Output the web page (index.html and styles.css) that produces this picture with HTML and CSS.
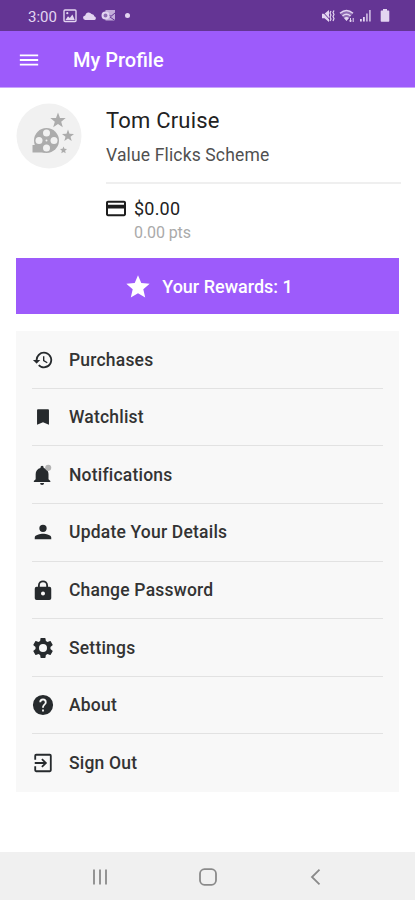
FILE: index.html
```html
<!DOCTYPE html>
<html lang="en">
<head>
<meta charset="utf-8">
<title>My Profile</title>
<link rel="stylesheet" href="styles.css">
</head>
<body>
<div class="screen">
  <div class="status">
    <span class="time">3:00</span>
    <svg class="s-image" width="14" height="14" viewBox="0 0 14 14"><rect x="1" y="1" width="12" height="11.5" rx="1" fill="none" stroke="currentColor" stroke-width="1.4"/><path d="M2.5 11 5 7.2l1.800 1.700L9.400 5.600l2.400 5.400z" fill="currentColor"/><circle cx="4.300" cy="4.200" r="1.100" fill="currentColor"/></svg>
    <svg class="s-cloud" width="15" height="10" viewBox="0 0 14 10"><path d="M3 9a2.300 2.300 0 0 1-.3-4.600A3.500 3.500 0 0 1 9 3a3 3 0 0 1 3 2.500A1.800 1.800 0 0 1 12 9z" fill="currentColor"/></svg>
    <svg class="s-mail" width="15" height="13" viewBox="0 0 15 13"><path d="M4.500 1h9.500v10.500H4.500z" fill="currentColor" opacity=".75"/><path d="m5 4 5 3.300L14 4M9 8l5 3.500" fill="none" stroke="#643594"/><circle cx="4.500" cy="6.500" r="3" fill="#8f6cb3" stroke="currentColor" stroke-width="2"/></svg>
    <span class="dot"></span>
    <span class="grow"></span>
    <svg class="s-mute" width="14" height="14" viewBox="0 0 14 14"><path d="M1 4.700h2.500L8 1v12L3.500 9.300H1z" fill="currentColor"/><path d="m.5 1.500 10 11" stroke="#643594"/><path d="m10 2-1 2 1 2-1 2 1 2-1 2M13 1.500l-1 2 1 2-1 2 1 2-1 2.500" fill="none" stroke="currentColor" stroke-width="1.200"/></svg>
    <svg class="s-wifi" width="16" height="14" viewBox="0 0 16 14"><path d="M1 4.200q6.500-5.500 13 0L7.500 12z" fill="currentColor" opacity=".35"/><path d="M1 4.200q6.500-5.500 13 0M3.500 7q4-3.400 8 0" fill="none" stroke="currentColor" stroke-width="1.500"/><path d="m5 9 2.500 3L10 9q-2.500-2-5 0z" fill="currentColor"/><path d="M11.500 9v4M10.500 11.500l1 1.500 1-1.500M14.200 13V9" fill="none" stroke="currentColor"/></svg>
    <svg class="s-signal" width="13" height="13" viewBox="0 0 13 13"><path d="M1 10h1.800v2.500H1zM4 8h1.800v4.500H4z" fill="currentColor"/><path d="M7 4.500h1.800v8H7zM10 1h1.800v11.500H10z" fill="currentColor" opacity=".75"/></svg>
    <svg class="s-battery" width="10" height="13" viewBox="0 0 10 13"><path d="M3 0h4v1.500h1.500q.8 0 .8.800V12q0 .8-.8.800h-7q-.8 0-.8-.8V2.300q0-.8.800-.8H3z" fill="currentColor"/></svg>
  </div>
  <header class="bar">
    <svg class="burger" width="22" height="22" viewBox="0 0 24 24"><path d="M2 18h20v-2H2zm0-5h20v-2H2zm0-7v2h20V6z" fill="#fff"/></svg>
    <h1>My Profile</h1>
  </header>
  <main>
    <section class="profile">
      <svg class="avatar" width="66" height="66" viewBox="0 0 66 66">
        <circle cx="33" cy="33" r="32.500" fill="#f1f1f1"/>
        <circle cx="30.500" cy="37.500" r="12.500" fill="#acacac"/><path d="M16.500 42H29v7.500H16.500z" fill="#acacac"/>
        <g fill="#f1f1f1"><circle cx="30.500" cy="30" r="3.500"/><circle cx="30.500" cy="45" r="3.500"/><circle cx="23" cy="37.500" r="3.500"/><circle cx="38" cy="37.500" r="3.500"/><circle cx="30.500" cy="37.500" r="1"/></g>
        <g fill="#acacac"><path d="m42 9.500 2 5.400 5.700.2-4.500 3.600 1.600 5.500-4.800-3.200-4.800 3.200 1.600-5.500-4.500-3.600 5.700-.2z"/><path d="m52 26.500 1.500 4.200 4.500.2-3.500 2.800 1.200 4.300-3.700-2.500-3.700 2.500 1.200-4.300-3.500-2.800 4.500-.2z"/><path d="m47.500 43.500 1 2.300 2.500.2-1.900 1.700.6 2.500-2.200-1.300-2.200 1.300.6-2.500-1.900-1.700 2.500-.2z"/></g>
      </svg>
      <div class="info">
        <h2>Tom Cruise</h2>
        <p class="scheme">Value Flicks Scheme</p>
        <div class="balance">
          <svg width="24" height="23" viewBox="0 0 24 24" preserveAspectRatio="none"><path d="M20 4H4c-1.110 0-2 .89-2 2v12c0 1.110.89 2 2 2h16c1.110 0 2-.89 2-2V6c0-1.110-.89-2-2-2zm0 14H4v-6h16v6zm0-10H4V6h16v2z" fill="#1d1d1d"/></svg>
          <div><div class="money">$0.00</div><div class="pts">0.00 pts</div></div>
        </div>
      </div>
    </section>
    <div class="rewards">
      <svg width="28" height="28" viewBox="0 0 24 24"><path d="M12 17.270 18.180 21l-1.640-7.030L22 9.240l-7.190-.61L12 2 9.190 8.630 2 9.240l5.460 4.730L5.820 21z" fill="#fff"/></svg>
      <span>Your Rewards: 1</span>
    </div>
    <nav class="menu">
      <div class="item"><svg viewBox="0 0 24 24"><path d="M13 3a9 9 0 0 0-9 9H1l3.890 3.890.07.14L9 12H6a7 7 0 1 1 2.060 4.940l-1.420 1.420A9 9 0 1 0 13 3zm-1 5v5l4.280 2.540.72-1.210-3.500-2.080V8z"/></svg><span>Purchases</span></div>
      <div class="item"><svg viewBox="0 0 24 24"><path d="M17.500 3.500h-11Q5.500 3.500 5.500 4.500v16l6.500-2.800 6.500 2.800v-16q0-1-1-1z"/></svg><span>Watchlist</span></div>
      <div class="item"><svg viewBox="0 0 24 24"><path d="M11 23a2.200 2.200 0 0 0 2.200-2.200H8.800A2.200 2.200 0 0 0 11 23zM18 16.500V11c0-3.200-1.900-5.900-5.300-6.600V3.600a1.700 1.700 0 0 0-3.400 0v.8C5.900 5.100 4 7.800 4 11v5.500l-2 2v1.200h18v-1.200z"/><circle cx="17.700" cy="4.200" r="3.300" fill="#b4b4b4"/></svg><span>Notifications</span></div>
      <div class="item"><svg viewBox="0 0 24 24"><path d="M12 12a4 4 0 1 0 0-8 4 4 0 0 0 0 8zm0 2c-3 0-9 1.340-9 4v2h18v-2c0-2.660-6-4-9-4z"/></svg><span>Update Your Details</span></div>
      <div class="item"><svg viewBox="0 0 24 24"><path d="M19 8.500h-1.500V7a5.500 5.500 0 0 0-11 0v1.500H5a2 2 0 0 0-2 2V21a2 2 0 0 0 2 2h14a2 2 0 0 0 2-2V10.500a2 2 0 0 0-2-2zM12 18a2.200 2.200 0 1 1 0-4.400 2.200 2.200 0 0 1 0 4.400zm3.500-9.500h-7V7a3.500 3.500 0 0 1 7 0z"/></svg><span>Change Password</span></div>
      <div class="item"><svg class="gear" viewBox="0 0 24 24"><path fill-rule="evenodd" d="M19.430 12.980c.04-.32.070-.64.070-.98s-.03-.66-.07-.98l2.110-1.650c.19-.15.240-.42.120-.64l-2-3.460c-.12-.22-.39-.3-.61-.22l-2.490 1c-.52-.4-1.080-.73-1.690-.98l-.38-2.650A.49.49 0 0 0 14 2h-4c-.25 0-.46.180-.49.420l-.38 2.650c-.61.250-1.170.59-1.690.98l-2.490-1c-.23-.09-.49 0-.61.220l-2 3.460c-.13.220-.07.490.120.640l2.110 1.650c-.04.320-.07.650-.07.980s.03.660.07.980l-2.110 1.650c-.19.150-.24.420-.12.640l2 3.460c.12.220.39.300.61.220l2.490-1c.52.400 1.080.73 1.690.98l.38 2.650c.03.240.24.420.49.420h4c.25 0 .46-.18.490-.42l.38-2.650c.61-.25 1.170-.59 1.690-.98l2.490 1c.23.090.49 0 .61-.22l2-3.460c.12-.22.070-.49-.12-.64zM12 16a4 4 0 1 1 0-8 4 4 0 0 1 0 8z"/></svg><span>Settings</span></div>
      <div class="item"><svg viewBox="0 0 24 24"><path d="M12 1a11 11 0 1 0 0 22 11 11 0 0 0 0-22zm1 18h-2v-2h2zm2.070-7.750-.9.920C13.450 12.900 13 13.500 13 15h-2v-.5c0-1.100.45-2.100 1.170-2.830l1.240-1.260A2 2 0 1 0 10 9H8a4 4 0 1 1 8 0c0 .88-.36 1.680-.93 2.250z"/></svg><span>About</span></div>
      <div class="item"><svg viewBox="0 0 24 24"><path d="M10.090 15.590 11.500 17l5-5-5-5-1.410 1.410L12.670 11H3v2h9.670zM19.500 2h-15a2 2 0 0 0-2 2V8.500h2V4h15v16h-15v-4.500h-2V20a2 2 0 0 0 2 2h15a2 2 0 0 0 2-2V4a2 2 0 0 0-2-2z"/></svg><span>Sign Out</span></div>
    </nav>
  </main>
  <footer class="navbar">
    <svg width="18" height="18" viewBox="0 0 18 18"><path d="M3 1.500v15M9 1.500v15M15 1.500v15"/></svg>
    <svg width="18" height="18" viewBox="0 0 18 18"><rect x="1" y="1.200" width="16" height="15.600" rx="4.500"/></svg>
    <svg width="18" height="18" viewBox="0 0 18 18"><path d="M12.500 1.700 5 9l7.500 7.300"/></svg>
  </footer>
</div>
</body>
</html>
```
FILE: styles.css
```css
* { box-sizing: border-box; }
body, h1, h2, p { margin: 0; }
body { background: #fff; color: #222; font-family: Roboto, "Liberation Sans", sans-serif; }
svg { display: block; flex: none; }
.screen { width: 415px; height: 900px; display: flex; flex-direction: column; overflow: hidden; }

.status { height: 31px; flex: none; background: #643594; color: #e3d5f1; display: flex; align-items: center; padding: 0 25px 0 28px; }
.time { font-size: 15px; line-height: 18px; width: 35px; margin-top: 2px; }
.s-cloud { margin-left: 5px; }
.s-mail { margin-left: 4px; }
.dot { width: 5px; height: 5px; border-radius: 50%; background: currentColor; margin-left: 9px; }
.grow { flex: 1; }
.s-wifi { margin-left: 4px; }
.s-signal { margin-left: 4px; }
.s-battery { margin-left: 8px; }

.bar { height: 57px; flex: none; background: #9d5bfb; color: #fff; display: flex; align-items: center; padding: 2px 18px 0; border-bottom: 1px solid #c9a5fc; }
.bar h1 { margin-left: 33px; font-size: 20px; line-height: 26px; font-weight: 500; }

main { flex: 1; padding: 15px 16px 0; }
.profile { display: flex; height: 155px; }
.info { margin-left: 24px; flex: 1; margin-right: -2px; }
h2 { margin-top: 4px; font-size: 22px; line-height: 27px; font-weight: 400; letter-spacing: .2px; }
.scheme { margin-top: 11px; height: 39px; font-size: 17.500px; line-height: 20px; letter-spacing: .15px; color: #505050; border-bottom: 2px solid #efefef; }
.balance { display: flex; margin-top: 13px; }
.balance svg { margin: 0 6px 0 -2px; }
.money { font-size: 18px; line-height: 24px; letter-spacing: .2px; }
.pts { font-size: 16px; line-height: 23px; color: #aaa; letter-spacing: -.1px; }

.rewards { height: 56px; background: #9d5bfb; color: #fff; display: flex; align-items: center; justify-content: center; gap: 10px; padding: 1px 0 0 2px; font-size: 18px; font-weight: 500; }
.menu { margin-top: 17px; height: 461px; background: #f8f8f8; padding: 0 16px; display: grid; grid-template-rows: repeat(8, 1fr); }
.item { display: flex; align-items: center; gap: 15px; font-size: 17.500px; font-weight: 500; letter-spacing: .2px; padding-top: .5px; border-bottom: 1px solid #e2e2e2; color: #333; }
.item:last-child { border-bottom: 0; }
.item svg { width: 22px; height: 22px; fill: #262a2d; }
.item .gear { width: 24px; height: 24px; margin: 0 -1px; }

.navbar { height: 48px; flex: none; background: #f0f0f0; display: flex; align-items: center; justify-content: space-between; padding: 2px 90px 0 91px; }
.navbar svg { fill: none; stroke: #8a8a8a; stroke-width: 1.800; }
```
